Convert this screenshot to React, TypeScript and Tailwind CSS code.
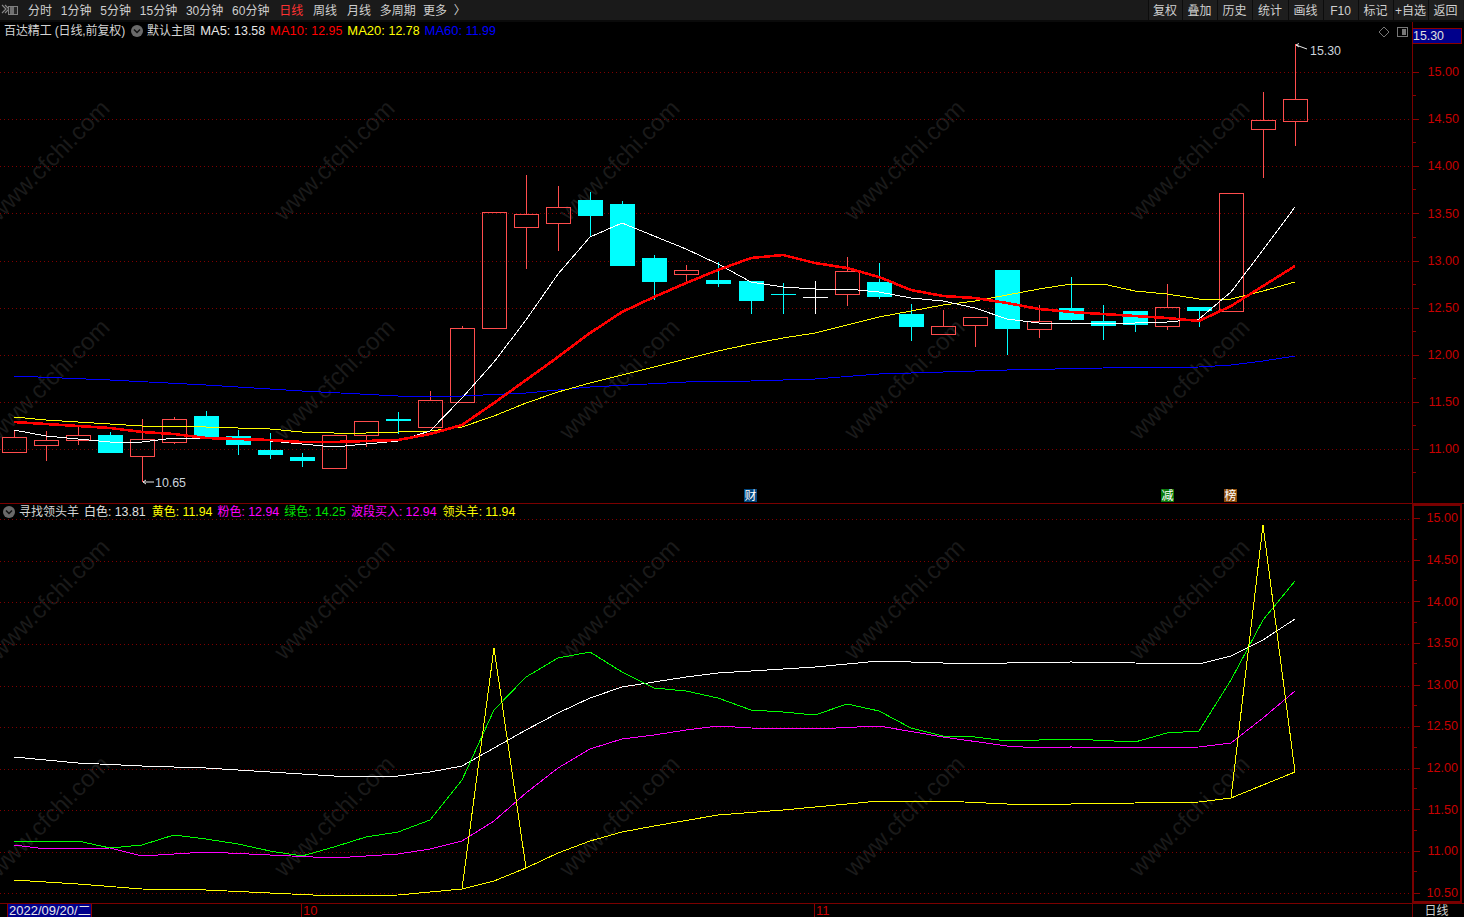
import React from "react";

type C = [number, number, number, number, number, "r" | "c" | "w"];
const candles: C[] = [
  [14, 430, 437, 452, 452, "r"], [46, 431, 440, 445, 461, "r"], [78, 427, 435, 440, 445, "r"],
  [110, 432, 435, 453, 453, "c"], [142, 419, 439, 456, 482, "r"], [174, 417, 419, 442, 444, "r"],
  [206, 411, 416, 439, 439, "c"], [238, 430, 436, 445, 455, "c"], [270, 433, 450, 455, 459, "c"],
  [302, 453, 457, 461, 467, "c"], [334, 435, 435, 468, 468, "r"], [366, 421, 421, 435, 447, "r"],
  [398, 412, 419, 421, 434, "c"], [430, 391, 400, 427, 427, "r"], [462, 326, 328, 402, 402, "r"],
  [494, 212, 212, 328, 328, "r"], [526, 175, 214, 227, 269, "r"], [558, 186, 207, 223, 251, "r"],
  [590, 192, 200, 216, 236, "c"], [622, 201, 204, 266, 266, "c"], [654, 255, 258, 282, 300, "c"],
  [686, 265, 270, 274, 281, "r"], [718, 262, 280, 284, 287, "c"], [751, 281, 281, 301, 314, "c"],
  [783, 283, 294, 295, 314, "c"], [815, 281, 297, 298, 314, "w"], [847, 257, 271, 294, 306, "r"],
  [879, 263, 282, 297, 299, "c"], [911, 304, 314, 327, 341, "c"], [943, 310, 326, 334, 334, "r"],
  [975, 317, 317, 325, 347, "r"], [1007, 270, 270, 329, 355, "c"], [1039, 305, 321, 329, 338, "r"],
  [1071, 277, 308, 320, 321, "c"], [1103, 305, 321, 326, 340, "c"], [1135, 311, 311, 325, 332, "c"],
  [1167, 284, 307, 326, 330, "r"], [1199, 307, 307, 311, 327, "c"], [1231, 193, 193, 311, 311, "r"],
  [1263, 92, 120, 129, 178, "r"], [1295, 44, 99, 121, 146, "r"],
];

const ma5 = "14,430 46,436 78,439 110,442 142,442 174,438 206,438 238,438 270,441 302,444 334,447 366,444 398,441 430,431 462,398 494,362 526,320 558,274 590,237 622,223 654,236 686,249 718,264 751,282 783,287 815,289 847,289 879,292 911,298 943,301 975,308 1007,319 1039,323 1071,323 1103,323 1135,323 1167,322 1199,319 1231,292 1263,250 1295,207";
const ma10 = "14,422 46,424 78,426 110,428 142,432 174,434 206,438 238,439 270,440 302,442 334,442 366,441 398,440 430,434 462,425 494,403 526,380 558,357 590,333 622,312 654,297 686,283 718,270 751,258 783,255 815,263 847,268 879,277 911,290 943,296 975,298 1007,303 1039,309 1071,312 1103,314 1135,316 1167,318 1199,321 1231,306 1263,286 1295,266";
const ma20 = "14,417 46,420 78,422 110,424 142,426 174,426 206,427 238,428 270,429 302,432 334,433 366,433 398,432 430,431 462,427 494,416 526,403 558,392 590,383 622,375 654,367 686,359 718,351 751,344 783,338 815,333 847,325 879,317 911,311 943,305 975,301 1007,295 1039,289 1071,284 1103,284 1135,291 1167,294 1199,299 1231,299 1263,291 1295,282";
const ma60 = "14,376 110,380 206,385 302,391 398,396 462,396 526,393 590,387 686,382 751,381 815,379 879,374 943,372 1007,370 1103,368 1199,367 1231,365 1263,361 1295,356";

const lWhite = "14,757 78,763 142,766 206,768 270,772 334,776 398,776 430,772 462,766 494,748 526,730 558,713 590,698 622,687 654,682 686,677 718,673 751,671 815,667 879,661 943,663 1007,663 1071,662 1135,663 1199,664 1231,656 1263,640 1295,619";
const lPink = "14,845 46,849 110,848 142,856 174,854 206,852 270,855 334,858 398,854 430,849 462,841 494,821 526,793 558,768 590,749 622,739 654,735 686,730 718,726 751,728 815,729 879,726 943,737 1007,746 1039,748 1071,747 1135,748 1199,747 1231,743 1263,718 1295,691";
const lGreen = "14,841 46,842 78,841 110,848 142,845 174,835 206,839 238,844 270,851 302,856 334,847 366,837 398,832 430,820 462,780 494,710 526,677 558,658 590,652 622,672 654,688 686,691 718,698 751,710 783,712 815,715 847,704 879,711 911,728 943,736 975,737 1007,741 1039,740 1071,739 1135,742 1167,733 1199,731 1231,680 1263,620 1295,581";
const lYellow = "14,880 78,884 142,889 206,890 270,893 334,896 398,895 462,889 494,881 526,868 558,853 590,841 622,832 654,826 718,815 783,810 879,801 943,801 1007,804 1071,804 1135,803 1199,802 1231,798 1263,785 1295,772";
const spike1 = "462,889 494,648 526,868";
const spike2 = "1231,798 1263,525 1295,772";

const RED = "#ff4d4d";
const CYAN = "#00ffff";

function Watermarks({ rows }: { rows: number[] }) {
  const xs = [55, 340, 625, 910, 1195, 1480];
  return (
    <g fill="#1a1a1a" fontFamily="'Liberation Sans', sans-serif" fontSize={24}>
      {rows.flatMap((y) =>
        xs.map((x) => (
          <text key={x + "-" + y} x={x} y={y} textAnchor="middle" transform={`rotate(-45 ${x} ${y})`}>
            www.cfchi.com
          </text>
        ))
      )}
    </g>
  );
}

function Grid({ ys }: { ys: number[] }) {
  return (
    <g stroke="#7f0000" strokeDasharray="1 3" shapeRendering="crispEdges">
      {ys.map((y) => (
        <line key={y} x1={0} x2={1412} y1={y + 0.5} y2={y + 0.5} />
      ))}
    </g>
  );
}

function Candle({ c }: { c: C }) {
  const [x, hi, top, bot, lo, kind] = c;
  const color = kind === "r" ? RED : kind === "c" ? CYAN : "#ffffff";
  const w = x + 0.5;
  if (kind === "c" || kind === "w") {
    return (
      <g shapeRendering="crispEdges">
        <line x1={w} x2={w} y1={hi} y2={lo} stroke={color} />
        <rect x={x - 12} y={top} width={25} height={Math.max(bot - top, 1)} fill={color} />
      </g>
    );
  }
  return (
    <g shapeRendering="crispEdges">
      <line x1={w} x2={w} y1={hi} y2={top} stroke={color} />
      <line x1={w} x2={w} y1={bot} y2={lo} stroke={color} />
      <rect x={x - 11.5} y={top + 0.5} width={24} height={bot - top} fill="none" stroke={color} />
    </g>
  );
}

function Line({ p, c, w = 1 }: { p: string; c: string; w?: number }) {
  return <polyline points={p} fill="none" stroke={c} strokeWidth={w} shapeRendering="crispEdges" />;
}

function MainChart() {
  return (
    <svg width={1412} height={481} viewBox="0 22 1412 481" className="block">
      <Watermarks rows={[166, 385, 605, 822]} />
      <Grid ys={[72, 119, 166, 213, 261, 308, 355, 402, 449]} />
      {candles.map((c) => (
        <Candle key={c[0]} c={c} />
      ))}
      <Line p={ma60} c="#0000ff" />
      <Line p={ma20} c="#ffff00" />
      <Line p={ma5} c="#ffffff" />
      <Line p={ma10} c="#ff0000" w={2.6} />
      <g stroke="#e8e8e8" fill="none" strokeWidth={1}>
        <path d="M1296 45 L1307 49 M1296 45 l3 -1.5 M1296 45 l3 2" />
        <path d="M143 482 L154 482 M143 482 l3 -2 M143 482 l3 2" />
      </g>
      <g fill="#ccd4dc" fontSize={12.4} fontFamily="'Liberation Sans', sans-serif">
        <text x={1310} y={55}>15.30</text>
        <text x={155} y={487}>10.65</text>
      </g>
      <g stroke="#777" fill="none" shapeRendering="crispEdges">
        <rect x={1397.5} y={27.5} width={10} height={9} rx={1} />
      </g>
      <rect x={1402} y={29} width={4} height={6} fill="#777" />
      <path d="M1384 27 L1389 32 L1384 37 L1379 32 Z" fill="none" stroke="#777" />
    </svg>
  );
}

function LowerChart() {
  return (
    <svg width={1412} height={399} viewBox="0 504 1412 399" className="block">
      <Watermarks rows={[605, 822]} />
      <Grid ys={[519, 561, 602, 644, 686, 727, 769, 810, 852, 893]} />
      <Line p={lWhite} c="#ffffff" />
      <Line p={lPink} c="#ff00ff" />
      <Line p={lGreen} c="#00ff00" />
      <Line p={lYellow} c="#ffff00" />
      <Line p={spike1} c="#ffff00" />
      <Line p={spike2} c="#ffff00" />
    </svg>
  );
}

function Axis({ labels, step, top, pr }: { labels: string[]; step: string; top: string; pr: string }) {
  return (
    <div className={`flex flex-col ${top}`}>
      {labels.map((l) => (
        <div key={l} className={`relative flex items-center ${step}`}>
          <div className="h-px w-[6px] bg-[#8b0000]" />
          <span className={`ml-auto text-[12.6px] text-[#c80000] ${pr}`}>{l}</span>
          <div className="absolute bottom-0 left-0 h-px w-[3px] bg-[#8b0000]" />
        </div>
      ))}
    </div>
  );
}

function Dot() {
  return (
    <span className="flex h-[12px] w-[12px] shrink-0 items-center justify-center rounded-full bg-[#6a6a6a]">
      <svg width={8} height={6} viewBox="0 0 8 6">
        <path d="M1 1.5 L4 4.5 L7 1.5" fill="none" stroke="#111" strokeWidth={1.5} />
      </svg>
    </span>
  );
}

function Legend({ label, value, color, num }: { label: string; value: string; color: string; num?: boolean }) {
  return (
    <span className={`whitespace-nowrap ${color}`}>
      <span className={num ? "text-[13px]" : "text-[12px]"}>{label}: </span>
      <span className="text-[12.4px]">{value}</span>
    </span>
  );
}

function Btn({ t, w }: { t: string; w: string }) {
  return (
    <div className={`flex h-full items-center justify-center border-l border-[#0c0c0c] bg-[#1e1e1e] pr-px pt-px text-[12px] text-[#d0d0d0] ${w}`}>
      {t}
    </div>
  );
}

const TXT = "text-[#cfcfcf]";
const menu: [string, string][] = [
  ["分时", TXT], ["1分钟", TXT], ["5分钟", TXT], ["15分钟", TXT],
  ["30分钟", TXT], ["60分钟", TXT], ["日线", "text-[#ff3232] ml-px"], ["周线", TXT + " ml-px"],
  ["月线", TXT + " ml-px"], ["多周期", TXT], ["更多  〉", TXT + " -ml-[1.5px] whitespace-pre"],
];

function Badge({ t, cls }: { t: string; cls: string }) {
  return (
    <span className={`flex h-[13px] w-[13px] items-center justify-center text-[12px] leading-none text-white ${cls}`}>{t}</span>
  );
}

export default function App() {
  return (
    <div
      className="flex h-[917px] w-[1464px] flex-col overflow-hidden bg-black text-[#d4d4d4]"
      style={{ fontFamily: "'Liberation Sans', 'Noto Sans CJK SC', sans-serif" }}
    >
      <header className="flex h-[22px] shrink-0 items-stretch border-b-2 border-[#0a0a0a] bg-[#1a1a1a] pr-px">
        <div className="flex w-[28px] items-center pl-px">
          <svg width={17} height={12} viewBox="0 0 17 12">
            <path d="M1 1 L5 5 L1 9 M4 1 L8 5 L4 9" fill="none" stroke="#8a8a8a" strokeWidth={1.1} />
            <rect x={7.5} y={2.5} width={9} height={8} fill="#262626" stroke="#808080" />
            <rect x={9} y={3} width={4} height={7} fill="#707070" />
          </svg>
        </div>
        <nav className="flex items-center gap-[8.8px] pt-px text-[12px]">
          {menu.map(([t, c]) => (
            <span key={t} className={`whitespace-nowrap ${c}`}>{t}</span>
          ))}
        </nav>
        <div className="ml-auto flex h-full">
          <Btn t="复权" w="w-[34px]" />
          <Btn t="叠加" w="w-[35px]" />
          <Btn t="历史" w="w-[35px]" />
          <Btn t="统计" w="w-[36px]" />
          <Btn t="画线" w="w-[35px]" />
          <Btn t="F10" w="w-[35px]" />
          <Btn t="标记" w="w-[35px]" />
          <Btn t="+自选" w="w-[35px]" />
          <Btn t="返回" w="w-[35px]" />
        </div>
      </header>

      <section className="flex h-[482px] shrink-0 border-b border-[#7a0000]">
        <div className="relative w-[1412px] overflow-hidden">
          <MainChart />
          <div className="absolute left-[4px] top-px flex h-[16px] items-center text-[12px]">
            <span className="whitespace-nowrap tracking-[-0.12px]">百达精工 (日线,前复权)</span>
            <span className="ml-[6px]"><Dot /></span>
            <span className="ml-[4px] whitespace-nowrap">默认主图</span>
            <span className="ml-[5px]"><Legend label="MA5" value="13.58" color="text-[#e6e6e6]" num /></span>
            <span className="ml-[5px]"><Legend label="MA10" value="12.95" color="text-[#ff0000]" num /></span>
            <span className="ml-[5px]"><Legend label="MA20" value="12.78" color="text-[#ffff00]" num /></span>
            <span className="ml-[5px]"><Legend label="MA60" value="11.99" color="text-[#0000ff]" num /></span>
          </div>
          <div className="absolute bottom-px left-[744px]"><Badge t="财" cls="bg-[#00467f]" /></div>
          <div className="absolute bottom-px left-[1161px]"><Badge t="减" cls="bg-[#0a7a0a]" /></div>
          <div className="absolute bottom-px left-[1224px]"><Badge t="榜" cls="bg-[#8a4a0a]" /></div>
        </div>
        <div className="relative w-[52px] border-l border-[#7a0000]">
          <Axis
            top="pt-[27px]"
            step="h-[47.15px]"
            pr="pr-[5px]"
            labels={["15.00", "14.50", "14.00", "13.50", "13.00", "12.50", "12.00", "11.50", "11.00"]}
          />
          <div className="absolute -left-px right-[2px] top-[6px] flex h-[16px] items-center border border-[#8b0000] bg-[#00008b] text-[12.4px] text-[#e0e0e0]">
            15.30
          </div>
        </div>
      </section>

      <section className="flex h-[399px] shrink-0">
        <div className="relative w-[1412px] overflow-hidden">
          <LowerChart />
          <div className="absolute left-[3px] top-0 flex h-[16px] items-center text-[12px]">
            <Dot />
            <span className="ml-[4px] whitespace-nowrap">寻找领头羊</span>
            <span className="ml-[5px]"><Legend label="白色" value="13.81" color="text-[#e0e0e0]" /></span>
            <span className="ml-[6px]"><Legend label="黄色" value="11.94" color="text-[#ffff00]" /></span>
            <span className="ml-[5px]"><Legend label="粉色" value="12.94" color="text-[#ff00ff]" /></span>
            <span className="ml-[5px]"><Legend label="绿色" value="14.25" color="text-[#00e000]" /></span>
            <span className="ml-[5px]"><Legend label="波段买入" value="12.94" color="text-[#ff00ff]" /></span>
            <span className="ml-[6px]"><Legend label="领头羊" value="11.94" color="text-[#ffff00]" /></span>
          </div>
        </div>
        <div className="h-[399px] w-[50px] overflow-hidden border-2 border-[#7a0000]">
          <Axis
            top="-mt-[8px]"
            step="h-[41.6px]"
            pr="pr-[2px]"
            labels={["15.00", "14.50", "14.00", "13.50", "13.00", "12.50", "12.00", "11.50", "11.00", "10.50"]}
          />
        </div>
      </section>

      <footer className="flex h-[14px] shrink-0 border-t border-[#7a0000] text-[13px] leading-[14px]">
        <div className="relative w-[1412px]">
          <span className="absolute left-[7px] top-0 whitespace-nowrap border-x border-[#8b0000] bg-[#00008b] pl-px text-[#e8e8e8]">2022/09/20/二</span>
          <span className="absolute left-[301px] top-0 border-l border-[#8b0000] pl-px text-[#c80000]">10</span>
          <span className="absolute left-[814px] top-0 border-l border-[#8b0000] pl-px text-[#c80000]">11</span>
        </div>
        <div className="flex w-[52px] justify-center border-l border-[#7a0000] pr-[4px] text-[12px] text-[#d0d0d0]">日线</div>
      </footer>
    </div>
  );
}
